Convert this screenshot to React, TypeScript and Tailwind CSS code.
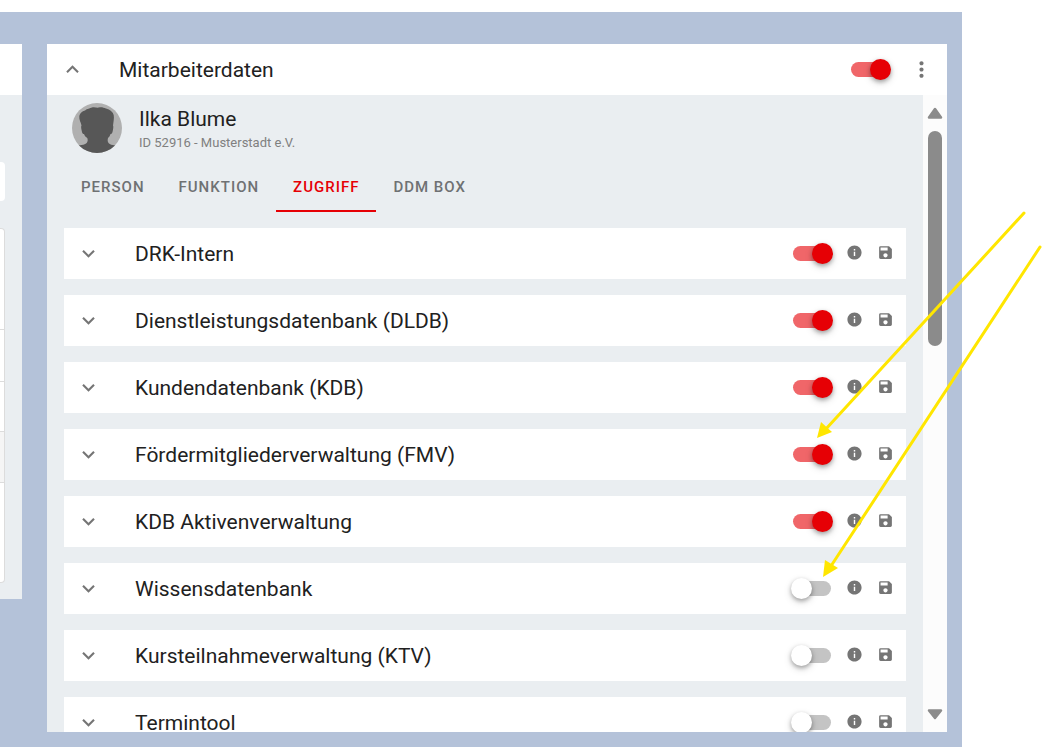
import { useState } from 'react';
import { MdExpandLess, MdExpandMore, MdInfo, MdMoreVert, MdSave } from 'react-icons/md';

const tabs = ['Person', 'Funktion', 'Zugriff', 'DDM Box'];

const initialAccess = [
  { id: 'drk', label: 'DRK-Intern', enabled: true },
  { id: 'dldb', label: 'Dienstleistungsdatenbank (DLDB)', enabled: true },
  { id: 'kdb', label: 'Kundendatenbank (KDB)', enabled: true },
  { id: 'fmv', label: 'Fördermitgliederverwaltung (FMV)', enabled: true },
  { id: 'aktive', label: 'KDB Aktivenverwaltung', enabled: true },
  { id: 'wissen', label: 'Wissensdatenbank', enabled: false },
  { id: 'ktv', label: 'Kursteilnahmeverwaltung (KTV)', enabled: false },
  { id: 'termin', label: 'Termintool', enabled: false }
];

function Switch({ label, checked, onChange }: { label: string; checked: boolean; onChange: () => void }) {
  return (
    <label className="relative block w-[38px] h-[15px] shrink-0 cursor-pointer">
      <input
        type="checkbox"
        role="switch"
        aria-label={label}
        checked={checked}
        onChange={onChange}
        className="peer sr-only"
      />
      <span className="block w-full h-full rounded-full bg-[#c4c4c4] peer-checked:bg-[#f06669]" />
      <span className="absolute -top-[3px] -left-[2px] w-[21px] h-[21px] rounded-full bg-white shadow-[0_2px_4px_rgba(0,0,0,0.3),0_3px_8px_rgba(0,0,0,0.14)] transition-[left] peer-checked:left-[19px] peer-checked:bg-[#e60005]" />
    </label>
  );
}

function Avatar() {
  return (
    <svg viewBox="0 0 50 50" className="w-[50px] h-[50px] shrink-0" aria-hidden="true">
      <clipPath id="avatar-clip">
        <circle cx="25" cy="25" r="25" />
      </clipPath>
      <g clipPath="url(#avatar-clip)">
        <rect width="50" height="50" fill="#b0b0b0" />
        <path
          fill="#575757"
          d="M7.300 13C8 10 10 8.500 13 7.500C15 5.500 18 5.500 20 4.500C23 4 25 5 27 4.500C30 4 32 5 34 5.500C38 6.500 41 9 41.700 12C42.300 15 41.500 19 41 22.500C41.600 23 41.300 26 40.500 29C40 30.500 39.500 31 38.500 31C38 33 37 34 36 35C35.500 37 35.500 38.500 36.500 40C38 41.500 40 42 43 42.500V50H7V42.500C10 42 13 41.500 14.700 40C15.800 38.500 16 37 15.300 35C14 34 12.500 33 12 31C11 31 10.300 30.500 10 29C9.300 26 8.700 23.500 9.500 22.500C8.800 19 7 17 7.300 13Z"
        />
      </g>
    </svg>
  );
}

// Neighbouring panel, only its right edge reaches into view
function SidePanel() {
  return (
    <aside className="w-[22px] shrink-0 self-start bg-[#eaeef1] pb-4">
      <div className="h-[51px] bg-white" />
      <div className="mt-[67px] w-[5px] h-[39px] bg-white rounded-r" />
      <div className="mt-[27px] w-[5px] bg-white border-y border-r border-[#dcdcdc] rounded-r overflow-hidden">
        <div className="h-[101px] border-b border-[#dcdcdc]" />
        <div className="h-[52px] border-b border-[#dcdcdc]" />
        <div className="h-[50px] border-b border-[#dcdcdc]" />
        <div className="h-[51px] border-b border-[#dcdcdc] bg-[#f5f5f5]" />
        <div className="h-[99px]" />
      </div>
    </aside>
  );
}

function Scrollbar() {
  return (
    <div className="w-6 shrink-0 bg-[#fcfcfc] flex flex-col items-center pt-3 pb-2" aria-hidden="true">
      <svg viewBox="0 0 16 12" className="w-4 h-3">
        <path d="M8 2L14 10.500H2Z" fill="#8b8b8b" stroke="#8b8b8b" strokeWidth="2.500" strokeLinejoin="round" />
      </svg>
      <div className="mt-3 w-[14px] h-[215px] rounded-full bg-[#8b8b8b]" />
      <svg viewBox="0 0 16 12" className="mt-auto w-4 h-3 mb-1">
        <path d="M8 10L14 2.500H2Z" fill="#8b8b8b" stroke="#8b8b8b" strokeWidth="2.500" strokeLinejoin="round" />
      </svg>
    </div>
  );
}

function Arrows() {
  return (
    <svg viewBox="0 0 1043 747" className="absolute top-0 left-0 w-[1043px] h-[747px] pointer-events-none" aria-hidden="true">
      <g stroke="#ffe600" strokeWidth="3" strokeLinecap="round">
        <path d="M1024 213L825 430" />
        <path d="M1040 247L831 566" />
      </g>
      <g fill="#ffe600">
        <path d="M817 438L821 422L832 432Z" />
        <path d="M823 577L825 560L838 568Z" />
      </g>
    </svg>
  );
}

export default function App() {
  const [activeTab, setActiveTab] = useState('Zugriff');
  const [panelEnabled, setPanelEnabled] = useState(true);
  const [access, setAccess] = useState(initialAccess);

  const toggleAccess = (id: string) => {
    setAccess(access.map((item) => (item.id === id ? { ...item, enabled: !item.enabled } : item)));
  };

  return (
    <div className="relative h-screen overflow-hidden bg-white pt-3 pr-[81px] font-[Roboto,sans-serif] text-[#212121]">
      <div className="h-full flex gap-[25px] bg-[#b4c2d9] pt-8 pr-[15px] pb-[15px]">
        <SidePanel />

        <main className="flex-1 min-w-0 flex flex-col bg-[#eaeef1]">
          {/* Panel header */}
          <header className="h-[51px] shrink-0 flex items-center bg-white px-[13px]">
            <button type="button" aria-label="Einklappen" className="text-[#757575] cursor-pointer">
              <MdExpandLess size={25} />
            </button>
            <h1 className="flex-1 ml-[34px] text-[21px] leading-7">Mitarbeiterdaten</h1>
            <Switch
              label="Mitarbeiterdaten"
              checked={panelEnabled}
              onChange={() => setPanelEnabled(!panelEnabled)}
            />
            <button type="button" aria-label="Mehr" className="ml-5 text-[#757575] cursor-pointer">
              <MdMoreVert size={25} />
            </button>
          </header>

          <div className="flex-1 min-h-0 flex">
            <div className="flex-1 min-w-0 overflow-hidden px-[17px] pt-2">
              {/* Person */}
              <div className="flex gap-[17px] pl-2">
                <Avatar />
                <div>
                  <h2 className="text-[21px] leading-8">Ilka Blume</h2>
                  <p className="text-[13px] leading-4 text-[#808080]">ID 52916 - Musterstadt e.V.</p>
                </div>
              </div>

              {/* Tabs */}
              <div role="tablist" className="flex mt-[9px] mb-4">
                {tabs.map((tab) => (
                  <button
                    key={tab}
                    type="button"
                    role="tab"
                    aria-selected={activeTab === tab}
                    onClick={() => setActiveTab(tab)}
                    className={`h-[50px] px-[17px] pt-0.5 border-b-2 text-[15px] font-medium uppercase tracking-[1px] whitespace-nowrap cursor-pointer ${activeTab === tab ? 'border-[#e60005] text-[#e60005]' : 'border-transparent text-[#6f7173]'
                      }`}
                  >
                    {tab}
                  </button>
                ))}
              </div>

              {/* Access list */}
              <ul className="space-y-4">
                {access.map((item) => (
                  <li key={item.id} className="h-[51px] flex items-center bg-white px-3">
                    <button type="button" aria-label={`${item.label} ausklappen`} className="text-[#757575] cursor-pointer">
                      <MdExpandMore size={25} />
                    </button>
                    <span className="flex-1 ml-[34px] text-[21px] leading-7 truncate">{item.label}</span>
                    <Switch label={item.label} checked={item.enabled} onChange={() => toggleAccess(item.id)} />
                    <button type="button" aria-label="Info" className="ml-[15px] pb-0.5 text-[#757575] cursor-pointer">
                      <MdInfo size={17} />
                    </button>
                    <button type="button" aria-label="Speichern" className="ml-[14px] pb-0.5 text-[#757575] cursor-pointer">
                      <MdSave size={17} />
                    </button>
                  </li>
                ))}
              </ul>
            </div>
            <Scrollbar />
          </div>
        </main>
      </div>
      <Arrows />
    </div>
  );
}
